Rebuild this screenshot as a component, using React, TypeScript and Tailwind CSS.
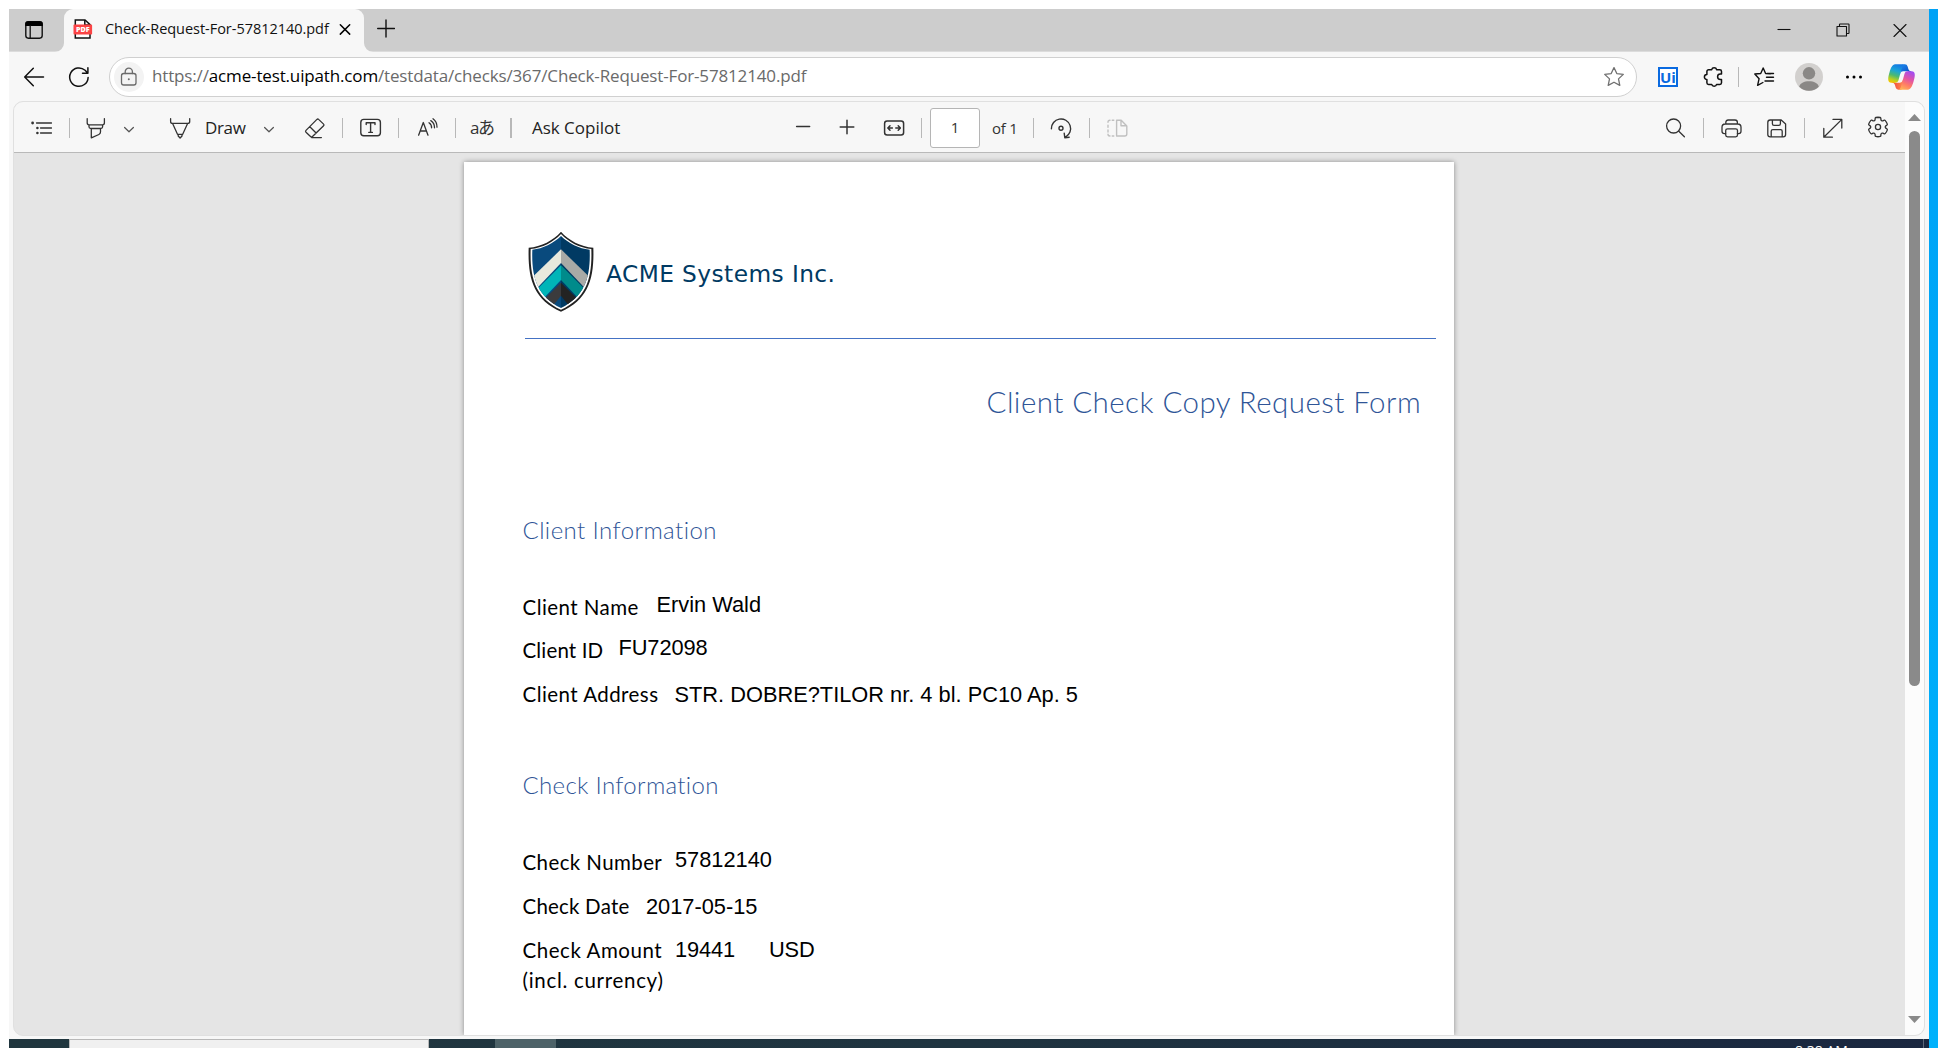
import { type ReactNode } from "react";

function Icon({ w = 24, h = 24, className = "", sw = 1.3, children }: { w?: number; h?: number; className?: string; sw?: number; children: ReactNode }) {
  return (
    <svg width={w} height={h} viewBox={`0 0 ${w} ${h}`} fill="none" stroke="currentColor" strokeWidth={sw} strokeLinecap="round" strokeLinejoin="round" className={`shrink-0 ${className}`}>
      {children}
    </svg>
  );
}

function Sep({ className = "w-px" }: { className?: string }) {
  return <div className={`h-5 shrink-0 bg-[#b8b8b8] ${className}`} />;
}

function PdfFavicon() {
  return (
    <svg width="20" height="20" viewBox="0 0 20 20" className="ml-[9px] shrink-0">
      <path d="M2.3 1H12l5 4.6V19H2.3Z" fill="#fff" stroke="#111" strokeWidth="1.5" />
      <path d="M11.8 1v5h5" fill="none" stroke="#111" strokeWidth="1.5" />
      <rect x="0.5" y="5.6" width="18.6" height="10" rx="0.8" fill="#fb4445" />
      <text x="9.8" y="13.2" textAnchor="middle" fontSize="7.2" fontWeight="800" fill="#fff" fontFamily="Open Sans, sans-serif">PDF</text>
    </svg>
  );
}

function TabStrip() {
  return (
    <div className="flex h-[43px] items-start border-b border-[#dcdcdc] bg-[#cdcdcd]">
      <div className="flex h-[42px] w-[55px] items-center justify-center">
        <svg width="20" height="20" viewBox="0 0 20 20" className="-mt-px -ml-[5px]">
          <rect x="1.8" y="1.8" width="16.4" height="16.4" rx="2.6" fill="none" stroke="#111" strokeWidth="1.4" />
          <path d="M1.2 6V4.2a3 3 0 0 1 3-3h11.6a3 3 0 0 1 3 3V6Z" fill="#000" />
          <path d="M6.2 5v13" stroke="#111" strokeWidth="1.3" />
        </svg>
      </div>
      <div className="relative flex h-[43px] w-[300px] items-start rounded-t-[9px] bg-[#f7f7f7] pt-[10px]">
        <svg width="9" height="9" viewBox="0 0 9 9" className="absolute bottom-0 -left-[9px]"><path d="M9 0A9 9 0 0 1 0 9H9Z" fill="#f7f7f7" /></svg>
        <svg width="9" height="9" viewBox="0 0 9 9" className="absolute -right-[9px] bottom-0"><path d="M0 0A9 9 0 0 0 9 9H0Z" fill="#f7f7f7" /></svg>
        <PdfFavicon />
        <span className="ml-[12px] w-[224px] text-[14.5px] leading-[20px] tracking-[-0.03px] whitespace-nowrap text-[#111]">Check-Request-For-57812140.pdf</span>
        <Icon w={12} h={20} className="ml-[10px] text-black" sw={1.5}><path d="M1.3 5.7l9.4 9.4M10.7 5.7l-9.4 9.4" /></Icon>
      </div>
      <Icon w={18} h={20} className="mt-[10px] ml-[13px] text-[#111]" sw={1.4}><path d="M9 1v17M.7 9.5h16.8" /></Icon>
      <div className="ml-auto flex h-[42px] items-center pr-[22px] text-[#111]">
        <Icon w={14} h={14} sw={1.1}><path d="M.5 6.5h13" strokeLinecap="butt" /></Icon>
        <Icon w={14} h={14} className="ml-[45px]" sw={1.1}><path d="M1 3.5h9.5V13H1ZM3.5 3.5V1.5q0-.5.5-.5h8.5q.5 0 .5.5V10q0 .5-.5.5h-2" /></Icon>
        <Icon w={14} h={14} className="ml-[43px]" sw={1.1}><path d="M1 1.5l12 12M13 1.5l-12 12" /></Icon>
      </div>
    </div>
  );
}

function CopilotLogo() {
  return (
    <svg width="29" height="28" viewBox="0 2 48 44" preserveAspectRatio="none" className="ml-6 shrink-0">
      <defs>
        <linearGradient id="ca" x1="0" y1="0" x2="1" y2="1"><stop offset="0" stopColor="#1b8df0" /><stop offset="1" stopColor="#0b3fb8" /></linearGradient>
        <linearGradient id="cb" x1="0" y1="0" x2="1" y2="0"><stop offset="0" stopColor="#f0443a" /><stop offset="1" stopColor="#ff8a50" /></linearGradient>
        <linearGradient id="cc" x1="0.6" y1="0" x2="0.3" y2="1"><stop offset="0" stopColor="#1477e4" /><stop offset="0.35" stopColor="#1aa5d8" /><stop offset="0.62" stopColor="#4cb972" /><stop offset="0.85" stopColor="#b8cf20" /><stop offset="1" stopColor="#f4c600" /></linearGradient>
        <linearGradient id="cd" x1="0.7" y1="0" x2="0.3" y2="1"><stop offset="0" stopColor="#a44cf0" /><stop offset="0.4" stopColor="#e255a4" /><stop offset="0.7" stopColor="#ff7c66" /><stop offset="1" stopColor="#ffb257" /></linearGradient>
      </defs>
      <path fill="url(#ca)" d="M34.142 7.325A4.63 4.63 0 0 0 29.7 4h-1.35a4.63 4.63 0 0 0-4.554 3.794L21.48 20.407l.575-1.965a4.63 4.63 0 0 1 4.444-3.33h7.853l3.294 1.282 3.175-1.283h-.926a4.63 4.63 0 0 1-4.443-3.325l-1.31-4.461Z" />
      <path fill="url(#cb)" d="M14.33 40.656A4.63 4.63 0 0 0 18.779 44h2.87a4.63 4.63 0 0 0 4.629-4.51l.312-12.163-.654 2.233a4.63 4.63 0 0 1-4.443 3.329h-7.919l-2.823-1.532-3.057 1.532h.912a4.63 4.63 0 0 1 4.447 3.344l1.279 4.423Z" />
      <path fill="url(#cc)" d="M29.5 4H13.46c-4.583 0-7.332 6.057-9.165 12.113C2.123 23.29-.72 32.885 7.503 32.885h6.925a4.63 4.63 0 0 0 4.456-3.358 2078.617 2078.617 0 0 1 4.971-17.156c.843-2.843 1.544-5.284 2.621-6.805C27.08 4.713 28.086 4 29.5 4Z" />
      <path fill="url(#cd)" d="M18.498 44h16.04c4.582 0 7.332-6.058 9.165-12.115 2.171-7.177 5.013-16.775-3.208-16.775h-6.926a4.63 4.63 0 0 0-4.455 3.358 2084.036 2084.036 0 0 1-4.972 17.16c-.842 2.843-1.544 5.285-2.62 6.806-.604.852-1.61 1.566-3.024 1.566Z" />
    </svg>
  );
}

function AddressRow() {
  return (
    <div className="flex h-[49px] items-center pt-px pl-[14px] text-[#111]">
      <Icon w={22} h={22} className="mb-px" sw={1.5}><path d="M20.5 11H2M10.3 2.3 1.7 11l8.6 8.7" /></Icon>
      <Icon w={22} h={22} className="mb-px ml-[23px]" sw={1.5}><path d="M20.1 11.4a9.2 9.2 0 1 1-3-7.1L19.6 7M19.9 1.8v5.4h-5.4" /></Icon>
      <div className="ml-[19px] flex h-10 w-[1528px] items-center rounded-full border border-[#d0d0d0] bg-white pl-1 text-[#5f6368]">
        <div className="flex h-[30px] w-[30px] items-center justify-center rounded-full bg-[#f3f3f3]">
          <Icon w={18} h={20} sw={1.3} className="mb-px text-[#6a6a6a]">
            <rect x="1.5" y="6.5" width="14.5" height="11.5" rx="2.2" />
            <path d="M5.2 6.5V4.8a3.6 3.6 0 0 1 7.2 0v1.7" />
            <circle cx="8.8" cy="12.2" r="1" fill="currentColor" stroke="none" />
          </Icon>
        </div>
        <span className="mb-[3px] ml-[8px] text-[17px] leading-[24px] tracking-[-0.15px] whitespace-nowrap text-[#6a6a6a]">
          https://<span className="text-black">acme-test.uipath.com</span>/testdata/checks/367/Check-Request-For-57812140.pdf
        </span>
        <Icon w={22} h={22} className="mr-[11px] ml-auto text-[#707070]" sw={1.3}>
          <path d="M11 1.6l2.8 6 6.5.8-4.8 4.5 1.3 6.5-5.8-3.2-5.8 3.2 1.3-6.5L1.7 8.4l6.5-.8Z" />
        </Icon>
      </div>
      <div className="ml-[21px] flex h-5 w-5 items-center justify-center border-2 border-[#0a6ae0] bg-white text-[15px] leading-none font-bold text-[#0a6ae0]">Ui</div>
      <Icon w={22} h={22} className="ml-[25px]" sw={1.5}>
        <path d="M5.6 3.7h3.1a2.5 2.3 0 0 1 4.9 0h3.2a1.7 1.7 0 0 1 1.7 1.7v2.7h-1.2a2.7 2.7 0 0 0 0 5.4h1.2v3.2a1.7 1.7 0 0 1-1.7 1.7h-3.2a2.5 2.3 0 0 1-4.9 0H5.6a1.7 1.7 0 0 1-1.7-1.7v-3.2a2.5 2.5 0 0 1 0-5V5.4a1.7 1.7 0 0 1 1.7-1.7Z" />
      </Icon>
      <Sep className="ml-[13px] w-px" />
      <Icon w={22} h={22} className="ml-[14px]" sw={1.4}>
        <path d="M17.2 7.9 12.6 7.5 10.2 2 7.7 7.5 1.8 8l4.3 4.7-1.5 6.7 5.3-2.9M13.5 11.2h7M12 15h8.5M14 7.5h6.5" />
      </Icon>
      <svg width="28" height="28" viewBox="0 0 28 28" className="ml-[20px] shrink-0">
        <circle cx="14" cy="14" r="14" fill="#d2d0ce" />
        <circle cx="14" cy="10.3" r="6.2" fill="#8a8886" />
        <path d="M4.2 23.8C5 20 9 18.2 14 18.2s9 1.8 9.8 5.6A14 14 0 0 1 4.2 23.8Z" fill="#8a8886" />
      </svg>
      <svg width="18" height="6" viewBox="0 0 18 6" className="ml-[22px] shrink-0 fill-black"><circle cx="2.5" cy="3" r="1.5" /><circle cx="9" cy="3" r="1.5" /><circle cx="15.5" cy="3" r="1.5" /></svg>
      <CopilotLogo />
    </div>
  );
}

function Chevron({ className = "" }: { className?: string }) {
  return <Icon w={12} h={12} className={`text-[#555] ${className}`} sw={1.2}><path d="M1.6 4.5 6 8.8l4.4-4.3" /></Icon>;
}

function PdfToolbar() {
  return (
    <div className="flex h-[51px] items-center border-b border-[#b9b9b9] bg-[#f7f7f7] pt-px pl-4 text-[#333]">
      <Icon w={24} h={24}><path d="M6.5 7h15M10.5 12h11M10.5 17h11" /><g fill="currentColor" stroke="none"><circle cx="2.6" cy="7" r="1.4" /><circle cx="7.4" cy="12" r="1.3" /><circle cx="7.4" cy="17" r="1.3" /></g></Icon>
      <Sep className="ml-[15px] w-px" />
      <Icon w={24} h={24} className="ml-[14px]"><path d="M3.2 2.6v4.2q0 2 1.8 2h13.6q1.8 0 1.8-2V2.6M5 9v1.8q0 1.4 1.4 1.6L7 12.5h9.6l.6-.1q1.4-.2 1.4-1.6V9M7.3 12.6v9.2l7.6-3.3q1.6-.7 1.6-2.4v-3.5" /></Icon>
      <Chevron className="mt-[2px] ml-[15px]" />
      <Icon w={24} h={24} className="ml-[33px]"><path d="M2.6 2.6v2.8q0 2 2 2h15.1q2 0 2-2V2.6M4.6 7.6l4.9 10.7h5.2l4.9-10.7M10.2 18.4v1.6l1.9 2 1.9-2v-1.6" /></Icon>
      <span className="ml-[13px] w-[41px] text-[17px] leading-6 tracking-[-0.35px] text-[#222]">Draw</span>
      <Chevron className="mt-[2px] ml-[17px]" />
      <Icon w={24} h={24} className="ml-[28px]"><path d="M15.6 3.4l5 4.7q.8.8 0 1.6L9.5 20.5q-1 1-2 0L3 16.2q-.9-.9 0-1.8L13.9 3.4q.9-.8 1.7 0ZM6.8 10.8l6.3 6.2M8.6 21.6h9.8" /></Icon>
      <Sep className="ml-[15px] w-px" />
      <Icon w={24} h={24} className="ml-[16px]" sw={1.4}><rect x="1.8" y="3.4" width="19.6" height="16.4" rx="3" /><path d="M7.2 8.5V6.8h8.8v1.7M11.6 6.8v9.5M9.8 16.4h3.6" /></Icon>
      <Sep className="ml-[15px] w-px" />
      <Icon w={24} h={24} className="ml-[17px]"><path d="M2.6 19.2 7.3 6.5l4.7 12.7M4.2 15h6.2M13 6.8q2.8 1.8 2.6 5M14.8 4.6q3.8 2.2 3.7 7.2M17 2.8q4 2.8 4 8.4" /></Icon>
      <Sep className="ml-[15px] w-px" />
      <span className="ml-[14px] w-[26px] text-[17px] leading-6 tracking-[-1.5px] whitespace-nowrap">aあ</span>
      <Sep className="ml-[14px] w-[2px]" />
      <span className="ml-[20px] w-[91px] text-[17px] leading-6 tracking-[-0.02px] whitespace-nowrap text-[#222]">Ask Copilot</span>
      <Icon w={16} h={16} className="mb-px ml-[172px]" sw={1.5}><path d="M1.6 7.5h13" /></Icon>
      <Icon w={16} h={16} className="mb-px ml-[28px]" sw={1.5}><path d="M1.2 8h13.6M8 1.2v13.6" /></Icon>
      <Icon w={22} h={22} className="ml-[28px]" sw={1.5}><rect x="1.6" y="4" width="19" height="14" rx="2.5" /><path d="M5 11h4.4M7 8.8 4.8 11 7 13.2M17.2 11h-4.4M15.2 8.8l2.2 2.2-2.2 2.2" /></Icon>
      <Sep className="ml-[16px] w-px" />
      <div className="ml-[8px] flex h-10 w-[50px] items-center justify-center rounded-[3px] border border-[#b5b5b5] bg-white text-[15px] leading-none">1</div>
      <span className="ml-[12px] w-[28px] text-[15px] leading-6 tracking-[-0.2px] whitespace-nowrap">of 1</span>
      <Sep className="ml-[13px] w-px" />
      <Icon w={24} h={24} className="ml-[15px]" sw={1.4}><path d="M2.4 12.8A9.6 9.6 0 1 1 16.6 21M15.2 17.2l.6 4.5 4.4-.5" /><circle cx="12" cy="12.3" r="2" /></Icon>
      <Sep className="ml-[16px] w-px" />
      <Icon w={24} h={24} className="ml-[16px] text-[#c0c0c0]" sw={1.4}><path d="M10.6 4.2V20h8.2q2 0 2-2v-8l-5.6-5.8ZM15 4.4v5.4h5.6M7.8 4.2H6.2M4 4.2q-2 0-2 2M2 9.2v2M2 14v2M2 18.2q0 1.8 2 1.8M6.2 20h1.6" /></Icon>
      <Icon w={24} h={24} className="ml-auto" sw={1.3}><circle cx="9.6" cy="10" r="7" /><path d="m14.8 15.2 5.6 5.6" /></Icon>
      <Sep className="ml-[15px] w-px" />
      <Icon w={24} h={24} className="ml-[16px]"><path d="M5.6 17.6H4.4q-2.4 0-2.4-2.4v-4q0-3.2 3.2-3.2h12.6q3.2 0 3.2 3.2v4q0 2.4-2.4 2.4h-1.2M5.8 8V6.4q0-2.4 2.4-2.4h6.8q2.4 0 2.4 2.4V8" /><rect x="5.7" y="12.8" width="11.8" height="8" rx="1.8" /></Icon>
      <Icon w={24} h={24} className="ml-[21px]"><path d="M5.2 4h11l4.4 4v10.4q0 2.4-2.4 2.4H5.2q-2.4 0-2.4-2.4v-12Q2.8 4 5.2 4ZM7.4 4.2v3.6q0 1.6 1.6 1.6h4.8q1.6 0 1.6-1.6V4.2M6.2 20.6v-5.4q0-1.6 1.6-1.6h7.8q1.6 0 1.6 1.6v5.4" /></Icon>
      <Sep className="ml-[15px] w-px" />
      <Icon w={24} h={24} className="ml-[16px]"><path d="M3 21 20.6 3.6M12 3.4h8.8v8.6M2.8 12.4v8.8h8.6" /></Icon>
      <Icon w={24} h={24} className="mr-[15px] mb-px ml-[21px]" sw={1.3}>
        <path d="M12.012 2.25c.734.008 1.465.093 2.182.253a.75.75 0 0 1 .582.649l.17 1.527a1.384 1.384 0 0 0 1.927 1.116l1.401-.615a.75.75 0 0 1 .85.174 9.792 9.792 0 0 1 2.204 3.792.75.75 0 0 1-.271.825l-1.242.916a1.381 1.381 0 0 0 0 2.226l1.243.915a.75.75 0 0 1 .272.826 9.797 9.797 0 0 1-2.204 3.792.75.75 0 0 1-.848.175l-1.407-.617a1.38 1.38 0 0 0-1.926 1.114l-.169 1.526a.75.75 0 0 1-.572.647 9.518 9.518 0 0 1-4.406 0 .75.75 0 0 1-.572-.647l-.168-1.524a1.382 1.382 0 0 0-1.926-1.11l-1.406.616a.75.75 0 0 1-.849-.175 9.798 9.798 0 0 1-2.204-3.796.75.75 0 0 1 .272-.826l1.243-.916a1.38 1.38 0 0 0 0-2.226l-1.243-.914a.75.75 0 0 1-.271-.826 9.793 9.793 0 0 1 2.204-3.792.75.75 0 0 1 .85-.174l1.4.615a1.387 1.387 0 0 0 1.93-1.118l.17-1.526a.75.75 0 0 1 .583-.65c.717-.159 1.45-.243 2.201-.252Z" />
        <circle cx="12" cy="12" r="2.6" />
      </Icon>
    </div>
  );
}

function Shield() {
  return (
    <svg width="66" height="81" viewBox="84 62 198 243" className="shrink-0">
      <defs><clipPath id="shield"><path d="M183 77C160 99 129 115 97 118C94 198 110 257 183 293C256 257 272 198 269 118C237 115 206 99 183 77Z" /></clipPath></defs>
      <path d="M183 64C160 90 124 109 86 112C83 204 100 267 183 304C266 267 283 204 280 112C242 109 206 90 183 64Z" fill="#222" />
      <path d="M183 71C160 95 127 113 92 116C89 202 106 263 183 298C260 263 277 202 274 116C239 113 206 95 183 71Z" fill="#fff" />
      <g clipPath="url(#shield)">
        <path d="M84 62h99v243H84Z" fill="#094a7d" />
        <path d="M183 62h99v243h-99Z" fill="#013a63" />
        <path d="M183 117 90 207l18 30 75-79Z" fill="#e8e9dd" />
        <path d="M183 117l93 90-18 30-75-79Z" fill="#a9aaa6" />
        <path d="M183 165 104 244l20 27 59-62Z" fill="#00b5b8" />
        <path d="M183 165l79 79-20 27-59-62Z" fill="#008b8b" />
        <path d="M183 217 130 270l20 28 33-42Z" fill="#3b3b3d" />
        <path d="M183 217l53 53-20 28-33-42Z" fill="#232323" />
      </g>
    </svg>
  );
}

function Field({ label, value, className = "", labelClass = "", valueClass = "", children }: { label: string; value: string; className?: string; labelClass?: string; valueClass?: string; children?: ReactNode }) {
  return (
    <div className={`flex items-start whitespace-nowrap ${className}`}>
      <span className={`font-[Lato] text-[20.5px] leading-6 ${labelClass}`}>{label}</span>
      <span className={`mt-px font-['Liberation_Sans'] text-[21.8px] leading-6 ${valueClass}`}>{value}</span>
      {children}
    </div>
  );
}

function Page() {
  return (
    <div className="mt-[9px] ml-[450px] h-[873px] w-[990px] shrink-0 overflow-hidden bg-white pl-[58.5px] text-black shadow-[0_0_5px_rgba(0,0,0,0.4)]">
      <div className="mt-[69px] ml-[5.5px] flex h-[81px] items-start">
        <Shield />
        <span className="mt-[27px] ml-[12px] font-['DejaVu_Sans'] text-[23.3px] leading-[32px] tracking-[0.42px] text-[#003a63]">ACME Systems Inc.</span>
      </div>
      <div className="mt-[26px] ml-[2.5px] h-px w-[911px] bg-[#4472c4]" />
      <h1 className="mt-[43px] ml-[464px] font-[Lato] text-[29.5px] leading-10 font-light tracking-[0.45px] whitespace-nowrap text-[#2f5597]">Client Check Copy Request Form</h1>
      <h2 className="mt-[92px] font-[Lato] text-[24px] leading-8 font-light tracking-[0.42px] text-[#2f5597]">Client Information</h2>
      <Field className="mt-[46px]" labelClass="mt-[3px] w-[134px] tracking-[0.45px]" label="Client Name" value="Ervin Wald" />
      <Field className="mt-[16px]" labelClass="mt-[3px] w-[96px] tracking-[0.15px]" label="Client ID" value="FU72098" valueClass="tracking-[-0.1px]" />
      <Field className="mt-[20px]" labelClass="w-[152px] tracking-[0.45px]" label="Client Address" value="STR. DOBRE?TILOR nr. 4 bl. PC10 Ap. 5" />
      <h2 className="mt-[62px] font-[Lato] text-[24px] leading-8 font-light tracking-[0.32px] text-[#2f5597]">Check Information</h2>
      <Field className="mt-[46px]" labelClass="mt-[3px] w-[152.5px] tracking-[0.4px]" label="Check Number" value="57812140" />
      <Field className="mt-[20px]" labelClass="w-[123.5px] tracking-[0.2px]" label="Check Date" value="2017-05-15" />
      <Field className="mt-[18px]" labelClass="mt-px w-[152.5px] tracking-[0.55px]" label="Check Amount" value="19441" valueClass="w-[94px] tracking-[-0.1px]">
        <span className="mt-px font-['Liberation_Sans'] text-[21.8px] leading-6 tracking-[-0.2px]">USD</span>
      </Field>
      <p className="mt-[6px] font-[Lato] text-[20.5px] leading-6 tracking-[0.7px]">(incl. currency)</p>
    </div>
  );
}

function Scrollbar() {
  return (
    <div className="flex w-[19px] shrink-0 flex-col items-center bg-[#fcfcfc]">
      <svg width="13" height="7" viewBox="0 0 13 7" className="mt-[12px]"><path d="M6.5 0 13 7H0Z" fill="#8a8a8a" /></svg>
      <div className="mt-[10px] h-[555px] w-[11px] rounded-full bg-[#8a8a8a]" />
      <svg width="13" height="7" viewBox="0 0 13 7" className="mt-auto mb-[12px]"><path d="M6.5 7 13 0H0Z" fill="#8a8a8a" /></svg>
    </div>
  );
}

function Taskbar() {
  return (
    <div className="flex h-[9px] overflow-hidden bg-linear-to-r from-[#20363e] via-[#1f3440] to-[#1a2740]">
      <div className="ml-[60px] w-[360px] border-x border-t border-[#b8b8b8] bg-[#f0f0f0]" />
      <div className="ml-[66px] w-[61px] bg-[#4d6268]" />
      <span className="mt-[4px] ml-auto w-[60px] text-[14px] leading-[16px] whitespace-nowrap text-white">8:38 AM</span>
      <div className="mr-[5px] ml-[68px] w-px bg-[#5c6678]" />
    </div>
  );
}

export default function App() {
  return (
    <div className="flex h-[1048px] w-[1938px] overflow-hidden bg-white pt-[9px] pl-[9px] font-['Open_Sans','Noto_Sans_CJK_JP',sans-serif]">
      <div className="flex w-[1920px] shrink-0 flex-col bg-[#f7f7f7]">
        <TabStrip />
        <AddressRow />
        <div className="mx-1 flex h-[935px] overflow-hidden rounded-[10px] border border-[#e0e0e0] bg-[#e5e5e5]">
          <div className="flex min-w-0 flex-1 flex-col">
            <PdfToolbar />
            <Page />
          </div>
          <Scrollbar />
        </div>
        <div className="mt-auto"><Taskbar /></div>
      </div>
      <div className="flex-1 bg-linear-to-b from-[#00a2f6] to-[#00b2fc]" />
    </div>
  );
}
